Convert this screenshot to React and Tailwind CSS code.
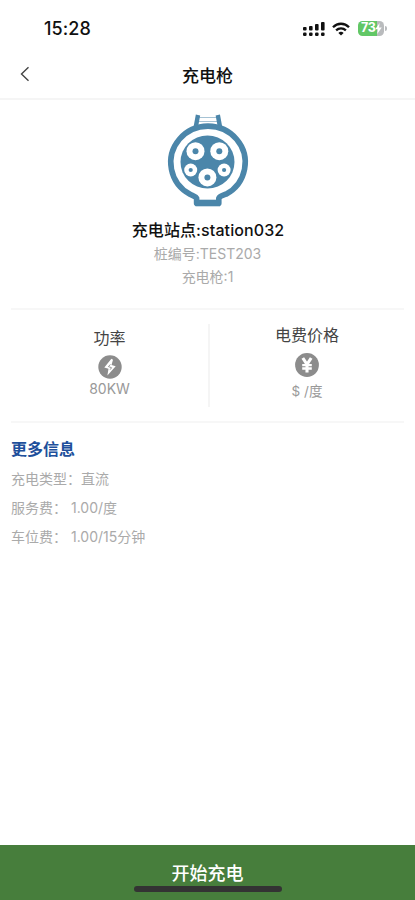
const DETAILS = [
  { label: '充电类型：', value: '直流' },
  { label: '服务费：', value: ' 1.00/度' },
  { label: '车位费：', value: ' 1.00/15分钟' }
];

const PINS = [
  { x: 195.5, y: 151.2, r: 9, dot: 3 },
  { x: 219.3, y: 151.2, r: 9, dot: 3 },
  { x: 190.7, y: 170, r: 6.5, dot: 2.1 },
  { x: 224.1, y: 170, r: 6.5, dot: 2.1 },
  { x: 207.4, y: 177.4, r: 9, dot: 3 }
];

const SIGNAL = [
  { x: 0, h: 3.5 },
  { x: 6, h: 4.5 },
  { x: 12, h: 6.5 },
  { x: 18, h: 8.5 }
];

const StatusBar = () => (
  <div className="flex h-[50px] items-center justify-between pt-[7px] pr-[28px] pl-[44px]">
    <span className="text-[18px] font-medium tracking-[0.1px] text-[#111]">15:28</span>
    <div className="flex items-center">
      <svg width="22" height="16" viewBox="0 0 22 16" fill="#111">
        {SIGNAL.map((bar) => (
          <g key={bar.x}>
            <rect x={bar.x} y={9.5 - bar.h} width="3.6" height={bar.h} rx="1" />
            <rect x={bar.x} y="11.6" width="3.6" height="3.4" rx="1.2" />
          </g>
        ))}
      </svg>
      <svg className="ml-[7px]" width="18" height="14" viewBox="0 0 18 14" fill="none" stroke="#111" strokeWidth="2.3">
        <path d="M1 5.2C5.5 .6 12.5 .6 17 5.2" />
        <path d="M4.1 8.3c2.8-2.7 7-2.7 9.8 0" />
        <path d="M9 13.6 6.4 10.9c1.5-1.4 3.7-1.4 5.2 0Z" fill="#111" stroke="none" />
      </svg>
      <div className="ml-[8px] flex h-[15px] w-[26px] items-center overflow-hidden rounded-[4.5px] bg-linear-to-r from-[#62c766] from-72% to-[#b9bbbd] to-72% pl-[3px]">
        <span className="text-[12.5px] leading-none font-bold tracking-[-0.4px] text-white">73</span>
        <svg width="7" height="11" viewBox="0 0 6 10" fill="#fff">
          <path d="M4 0 0 5.6h2.4L1.8 10 6 4.2H3.5Z" />
        </svg>
      </div>
      <span className="ml-px h-[5px] w-[2px] rounded-r-full bg-[#b9bbbd]" />
    </div>
  </div>
);

const PlugIcon = () => (
  <svg width="90" height="98" viewBox="163 112 90 98">
    <g fill="none" stroke="#4b86aa" strokeLinejoin="round">
      <path d="M198 115 195.6 128M217.8 115 220.2 128" strokeWidth="4.4" />
      <path d="M199 117.5h18" strokeWidth="1" opacity=".5" />
      <path d="M199 121.5h18" strokeWidth="1" opacity=".5" />
      <path
        d="M196.6 203.2V198.3C195.5 196 192.5 195.6 190 194.2A37.2 36.3 0 1 1 226 194.2C222.5 195.6 220 196 218.8 198.3V203.2Z"
        strokeWidth="5.6"
      />
      <path d="M195.5 203h24.6" strokeWidth="6.6" />
    </g>
    <ellipse cx="207.5" cy="162" rx="27" ry="26.6" fill="#4b86aa" />
    {PINS.map((pin) => (
      <g key={`${pin.x}-${pin.y}`}>
        <circle cx={pin.x} cy={pin.y} r={pin.r} fill="#fff" />
        <circle cx={pin.x} cy={pin.y} r={pin.dot} fill="#4b86aa" />
      </g>
    ))}
  </svg>
);

const BoltIcon = () => (
  <svg width="24" height="24" viewBox="0 0 24 24">
    <circle cx="12" cy="12" r="11.7" fill="#8c8c8c" />
    <path d="M13.4 3.8 6.3 12.6l4.2 1.2-1.1 6.6 8.3-9.2-4.2-1.2 1.5-5.2Z" fill="#fff" />
    <path d="m12.4 9.4-2 2.2 3.2 1.1-1.5 2" fill="none" stroke="#8c8c8c" strokeWidth=".9" />
  </svg>
);

const YuanIcon = () => (
  <svg width="24" height="24" viewBox="0 0 24 24">
    <circle cx="12" cy="12" r="11.9" fill="#8c8c8c" />
    <path d="m7.8 5 4.2 6.4L16.2 5M12 11v8.6" fill="none" stroke="#fff" strokeWidth="3.1" />
    <path d="M7.2 12.1h9.6M7.2 15.5h9.6" fill="none" stroke="#fff" strokeWidth="2.3" />
  </svg>
);

const App = () => {
  return (
    <div className="flex h-[900px] w-[415px] flex-col bg-white font-['Inter','Noto_Sans_CJK_SC',sans-serif]">
      <StatusBar />

      <header className="grid h-[50px] grid-cols-[50px_1fr_50px] items-center border-b-2 border-[#f5f5f5]">
        <svg className="ml-[20px]" width="10" height="16" viewBox="0 0 10 16" fill="none" stroke="#444" strokeWidth="1.4">
          <path d="M8.5 1.3 1.5 8l7 6.7" />
        </svg>
        <h1 className="pt-[3px] text-center text-[17px] leading-6 font-medium text-[#111]">充电枪</h1>
      </header>

      <section className="flex h-[208px] flex-col items-center pt-[12px]">
        <PlugIcon />
        <h2 className="mt-[8px] pl-px text-[16px] leading-6 font-medium tracking-[0.1px] whitespace-nowrap text-[#111]">
          充电站点:station032
        </h2>
        <p className="text-[14px] leading-6 text-[#aaa]">桩编号:TEST203</p>
        <p className="-mt-px text-[14px] leading-6 text-[#aaa]">充电枪:1</p>
      </section>

      <section className="mx-[11px] flex h-[115px] border-y-2 border-[#f7f7f7] py-[14px]">
        <div className="flex w-[197px] flex-col items-center pt-[2px]">
          <h3 className="text-[16px] leading-6 text-[#444]">功率</h3>
          <div className="mt-[5px]">
            <BoltIcon />
          </div>
          <p className="text-[14px] leading-5 text-[#999]">80KW</p>
        </div>
        <div className="flex flex-1 flex-col items-center border-l-2 border-[#f5f5f5]">
          <h3 className="-mt-px text-[16px] leading-6 text-[#444]">电费价格</h3>
          <div className="mt-[6px]">
            <YuanIcon />
          </div>
          <p className="mt-[4px] text-[13.5px] leading-5 text-[#999]">$ /度</p>
        </div>
      </section>

      <section className="flex-1 px-[11px] pt-[14px]">
        <h3 className="text-[16px] leading-6 font-bold text-[#204f9b]">更多信息</h3>
        <dl className="mt-[3px] text-[14px] leading-[29px] text-[#aaa]">
          {DETAILS.map((item) => (
            <div key={item.label} className="flex whitespace-pre">
              <dt>{item.label}</dt>
              <dd>{item.value}</dd>
            </div>
          ))}
        </dl>
      </section>

      <footer className="flex h-[55px] flex-col items-center bg-[#477e3c] pt-[17px]">
        <button className="text-[18px] leading-6 font-medium text-white">开始充电</button>
        <div className="h-[6px] w-[148px] rounded-full bg-[#333]" />
      </footer>
    </div>
  );
};

export default App;
